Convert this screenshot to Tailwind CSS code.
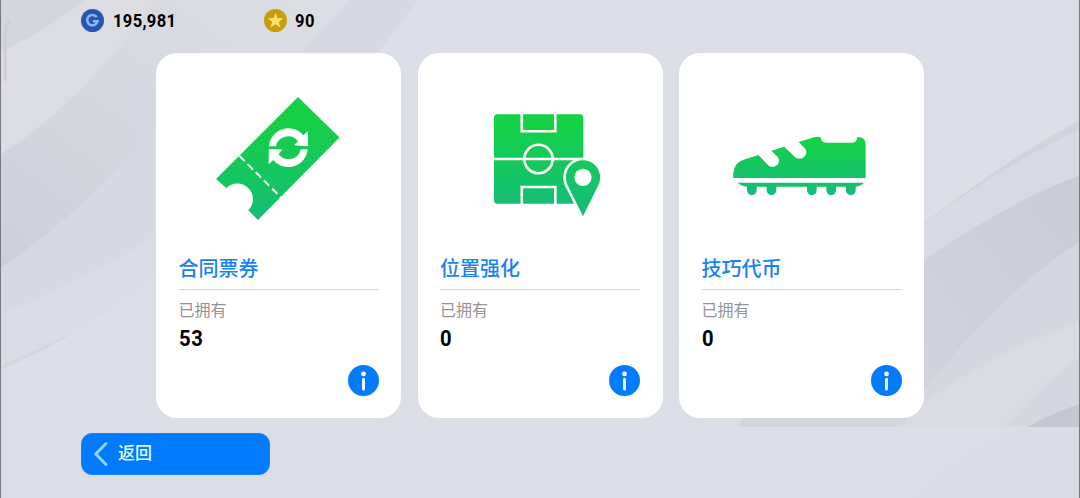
<!DOCTYPE html>
<html lang="zh-CN">
<head>
    <meta charset="UTF-8">
    <meta name="viewport" content="width=device-width, initial-scale=1.0">
    <title>道具</title>
    <script src="https://cdn.jsdelivr.net/npm/@tailwindcss/browser@4"></script>
</head>
<body class="relative h-[498px] w-[1080px] overflow-hidden bg-[#dbdee6] font-['Roboto','Noto_Sans_CJK_SC',sans-serif]">
    <!-- background ribbons -->
    <svg class="absolute inset-0 -z-10" width="1080" height="498" viewBox="0 0 1080 498">
        <defs>
            <linearGradient id="ribbonLeft" x1="0" y1="1" x2="1" y2="0">
                <stop offset="0" stop-color="#cdd0d9"/>
                <stop offset="0.5" stop-color="#d5d8df"/>
                <stop offset="1" stop-color="#dddee3"/>
            </linearGradient>
            <linearGradient id="ribbonRight" x1="0" y1="1" x2="1" y2="0">
                <stop offset="0" stop-color="#d2d5dd"/>
                <stop offset="1" stop-color="#c9ccd4"/>
            </linearGradient>
        </defs>
        <path fill="#d9dce4" d="M0 370Q85 333 160 273L420 0H0Z"/>
        <path fill="#d3d6de" d="M0 370Q40 353 80 329Q40 349 0 366Z"/>
        <path fill="#d6d9e1" d="M0 315Q85 280 160 233L378 53L418 0H0Z"/>
        <path fill="url(#ribbonLeft)" d="M0 268Q85 213 160 119L300 53L350 0H0Z"/>
        <path fill="#dcdde3" d="M0 155Q80 105 155 0H0Z"/>
        <path fill="#d3d6dd" d="M0 52Q45 32 85 0H0Z"/>
        <path fill="none" stroke="#cfd0d6" stroke-width="3" d="M10 20Q5 28 5 40V81"/>

        <path fill="#d7dae2" d="M900 240Q990 170 1080 120V427H900Z"/>
        <path fill="#d0d3db" d="M924 224Q1000 163 1080 120V129Q1000 167 924 224Z"/>
        <path fill="url(#ribbonRight)" d="M900 277Q1000 205 1080 175V242Q1010 285 926 388L900 410Z"/>
        <path fill="#d4d7df" d="M926 388Q1010 287 1080 242V322Q1000 349 926 402Z"/>
        <path fill="#d8dbe2" d="M926 402Q1000 349 1080 322V427H900Z"/>
        <path fill="#d4d7df" d="M1003 427Q1040 385 1080 358V427Z"/>
        <path fill="#c4c7cf" d="M1027 427Q1052 413 1080 404V427Z"/>
        <path fill="#d2d5db" d="M738 427L744 415H912L896 427Z"/>
        <path fill="#d9dce4" d="M910 498Q960 450 1020 428H1080V498Z"/>
        <path fill="#77787d" d="M0 0H1V498H0ZM1079 0H1080V498H1079Z"/>
    </svg>

    <!-- currency bar -->
    <header class="flex h-[53px] items-start pt-[9px] pl-[81px] text-[18px] leading-[23px] font-bold text-black">
        <div class="flex w-[183px] items-center gap-[9px]">
            <svg width="23" height="23" viewBox="0 0 23 23">
                <circle cx="11.5" cy="11.5" r="11.5" fill="#2855b4"/>
                <path fill="none" stroke="#86bdf8" stroke-width="2.5" d="M15.600 8A5.200 5.200 0 1 0 16.500 12.200H11.800"/>
            </svg>
            <span class="origin-left scale-x-[0.92] tracking-[0.35px]">195,981</span>
        </div>
        <div class="flex items-center gap-2">
            <svg width="23" height="23" viewBox="0 0 23 23">
                <circle cx="11.5" cy="11.5" r="11.5" fill="#c79d0b"/>
                <path fill="#ffe06c" d="M11.5 3.7L13.5 9.1L19.3 9.3L14.8 12.9L16.4 18.5L11.5 15.3L6.6 18.5L8.2 12.9L3.7 9.3L9.5 9.1Z"/>
            </svg>
            <span class="origin-left scale-x-[0.92] tracking-[0.5px]">90</span>
        </div>
    </header>

    <main class="flex gap-[16.5px] pl-[156px]">
        <section class="flex h-[365px] w-[245px] flex-col rounded-[21px] bg-white">
            <svg class="shrink-0" width="245" height="200" viewBox="156 53 245 200">
                <defs>
                    <linearGradient id="green1" gradientUnits="userSpaceOnUse" x1="0" y1="97" x2="0" y2="220">
                        <stop offset="0.2" stop-color="#15d045"/>
                        <stop offset="1" stop-color="#15bd74"/>
                    </linearGradient>
                </defs>
                <path fill="url(#green1)" d="M298 97L339.5 137.5L258 220L248.3 210.3A15.5 15.5 0 0 0 226.3 188L216 179Z"/>
                <path stroke="#f2fff4" stroke-width="2" stroke-dasharray="7.5 4" d="M239.5 156L281 197.5"/>
                <g fill="#fff">
                    <path d="M268.9 146.2A19.5 19.5 0 0 1 303.3 135.3L308 131.3V146.2L294 145.3L298 141.2A12.6 12.6 0 0 0 275.8 146.2Z"/>
                    <path d="M307.7 149.2A19.5 19.5 0 0 1 273.3 160.1L268.7 164.3V149.2H282.6L278.6 154.2A12.6 12.6 0 0 0 300.8 149.2Z"/>
                </g>
            </svg>
            <div class="flex flex-col px-[22.5px]">
                <h2 class="h-[37px] border-b-[1.5px] border-[#d4d4d8] pt-0.5 text-[20px] leading-7 font-medium text-[#1782f3]">合同票券</h2>
                <span class="mt-[9px] text-[16px] leading-6 text-[#929297]">已拥有</span>
                <span class="mt-0.5 origin-left scale-x-[0.92] text-[22px] leading-[27px] font-bold tracking-[0.7px] text-black">53</span>
                <svg class="mt-[13px] self-end" width="31" height="31" viewBox="0 0 31 31">
                    <circle cx="15.5" cy="15.5" r="15.5" fill="#037bff"/>
                    <circle cx="15.5" cy="8.9" r="2.4" fill="#fff"/>
                    <path stroke="#e9f5ff" stroke-width="3" stroke-linecap="round" d="M15.5 14.3V24"/>
                </svg>
            </div>
        </section>

        <section class="flex h-[365px] w-[245px] flex-col rounded-[21px] bg-white">
            <svg class="shrink-0" width="245" height="200" viewBox="418 53 245 200">
                <defs>
                    <linearGradient id="green2" gradientUnits="userSpaceOnUse" x1="0" y1="114" x2="0" y2="216">
                        <stop offset="0.1" stop-color="#14d247"/>
                        <stop offset="0.9" stop-color="#15bd74"/>
                    </linearGradient>
                </defs>
                <rect x="494" y="114.3" width="89.3" height="89.5" rx="3.5" fill="url(#green2)"/>
                <g fill="none" stroke="#fff" stroke-width="2.6">
                    <path d="M494 159H583.5M521.8 114V131.3H555.3V114M521.8 204V187H555.3V204"/>
                    <circle cx="538.5" cy="159" r="14.2"/>
                </g>
                <path fill="url(#green2)" stroke="#fff" stroke-width="5" paint-order="stroke" d="M583 216.3L569 188Q565.8 183 565.8 177.5A17.2 17.2 0 0 1 600.2 177.5Q600.2 183 597 188Z"/>
                <circle cx="583" cy="177.3" r="8.6" fill="#fff"/>
            </svg>
            <div class="flex flex-col px-[22.5px]">
                <h2 class="h-[37px] border-b-[1.5px] border-[#d4d4d8] pt-0.5 text-[20px] leading-7 font-medium text-[#1782f3]">位置强化</h2>
                <span class="mt-[9px] text-[16px] leading-6 text-[#929297]">已拥有</span>
                <span class="mt-0.5 origin-left scale-x-[0.92] text-[22px] leading-[27px] font-bold text-black">0</span>
                <svg class="mt-[13px] self-end" width="31" height="31" viewBox="0 0 31 31">
                    <circle cx="15.5" cy="15.5" r="15.5" fill="#037bff"/>
                    <circle cx="15.5" cy="8.9" r="2.4" fill="#fff"/>
                    <path stroke="#e9f5ff" stroke-width="3" stroke-linecap="round" d="M15.5 14.3V24"/>
                </svg>
            </div>
        </section>

        <section class="flex h-[365px] w-[245px] flex-col rounded-[21px] bg-white">
            <svg class="shrink-0" width="245" height="200" viewBox="679 53 245 200">
                <defs>
                    <linearGradient id="green3" gradientUnits="userSpaceOnUse" x1="0" y1="50" x2="0" y2="225">
                        <stop offset="0.1" stop-color="#13d147"/>
                        <stop offset="0.9" stop-color="#16bd76"/>
                    </linearGradient>
                </defs>
                <g fill="url(#green3)" transform="translate(720 120) scale(0.3333)">
                    <path d="M40 174V158Q44 126 75 118L115 105L143 134C160 151 186 132 174 112L154 92L193 80L224 110C242 126 268 106 256 86L236 66L282 52Q303 47 303 55Q305 68 318 68H398Q410 68 412 51Q436 50 437 72V174Z"/>
                    <path d="M53 188H432Q423 199 407 200V211A14.500 14.500 0 0 1 378 211V200H348V211A14.500 14.500 0 0 1 319 211V200H290V211A14.500 14.500 0 0 1 261 211V200H169V211A14.500 14.500 0 0 1 140 211V200H110V211A14.500 14.500 0 0 1 81 211V200Q64 199 53 188Z"/>
                </g>
            </svg>
            <div class="flex flex-col px-[22.5px]">
                <h2 class="h-[37px] border-b-[1.5px] border-[#d4d4d8] pt-0.5 text-[20px] leading-7 font-medium text-[#1782f3]">技巧代币</h2>
                <span class="mt-[9px] text-[16px] leading-6 text-[#929297]">已拥有</span>
                <span class="mt-0.5 origin-left scale-x-[0.92] text-[22px] leading-[27px] font-bold text-black">0</span>
                <svg class="mt-[13px] self-end" width="31" height="31" viewBox="0 0 31 31">
                    <circle cx="15.5" cy="15.5" r="15.5" fill="#037bff"/>
                    <circle cx="15.5" cy="8.9" r="2.4" fill="#fff"/>
                    <path stroke="#e9f5ff" stroke-width="3" stroke-linecap="round" d="M15.5 14.3V24"/>
                </svg>
            </div>
        </section>
    </main>

    <footer class="pt-[15px] pl-[81px]">
        <button class="flex h-[42px] w-[189px] items-center gap-[9px] rounded-[11px] border border-[#1485fc] bg-[#007bff] pl-3 text-[17px] leading-6 font-medium text-[#e2f8ff]">
            <svg width="15" height="26" viewBox="0 0 15 26">
                <path fill="none" stroke="#93d2ff" stroke-width="2.8" stroke-linecap="round" d="M12 2.500L1.800 13L12 23.500"/>
            </svg>
            <span class="pb-0.5">返回</span>
        </button>
    </footer>
</body>
</html>
